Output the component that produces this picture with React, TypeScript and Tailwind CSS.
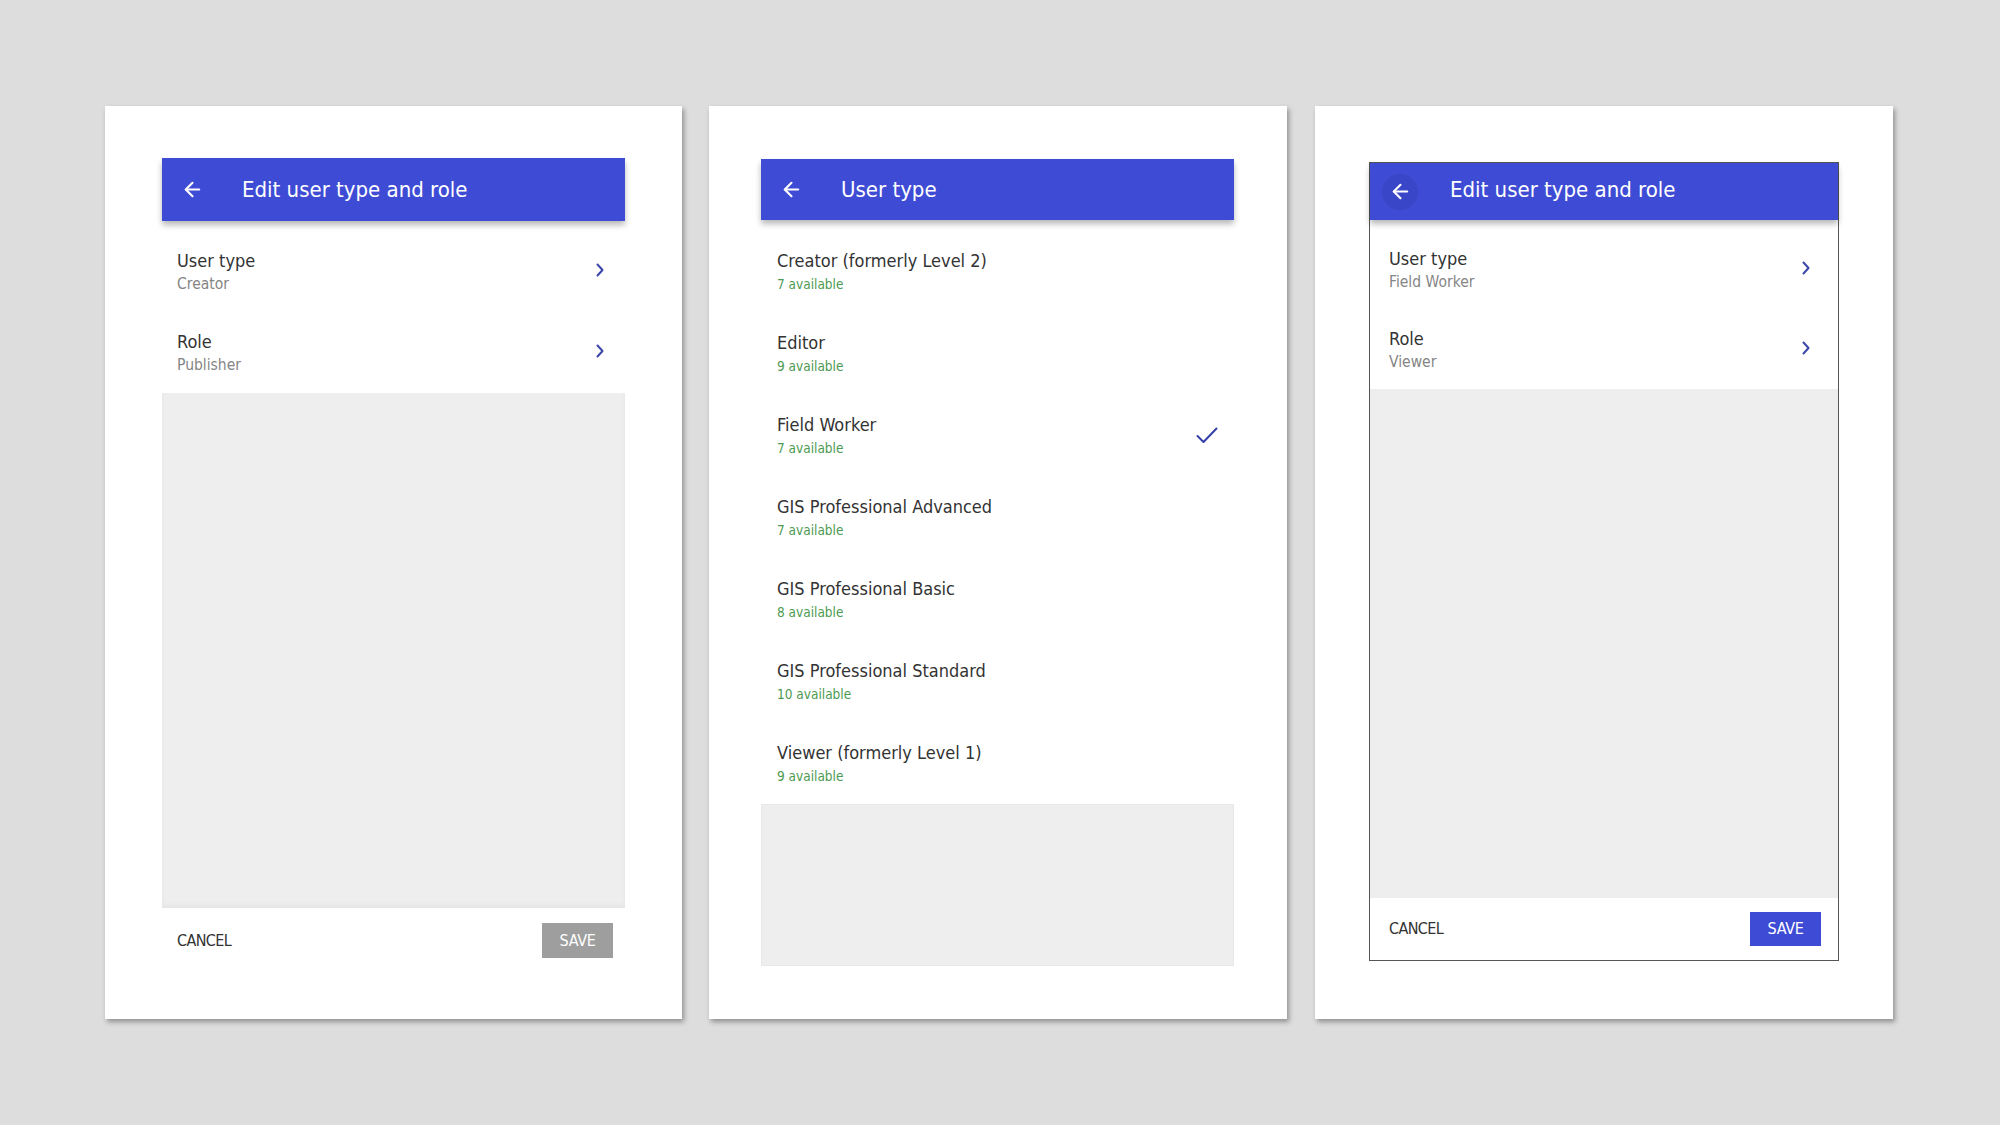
import { ArrowLeft } from "lucide-react";

const FONT = { fontFamily: '"DejaVu Sans Condensed", "DejaVu Sans", sans-serif' };

const USER_TYPES = [
  { name: "Creator (formerly Level 2)", count: 7 },
  { name: "Editor", count: 9 },
  { name: "Field Worker", count: 7, selected: true },
  { name: "GIS Professional Advanced", count: 7 },
  { name: "GIS Professional Basic", count: 8 },
  { name: "GIS Professional Standard", count: 10 },
  { name: "Viewer (formerly Level 1)", count: 9 },
];

function Chevron() {
  return (
    <svg width="10" height="14" viewBox="0 0 10 14" fill="none" className="-mt-[3px]">
      <polyline points="2.5,1.5 7.5,7 2.5,12.5" stroke="#3a46a8" strokeWidth="2" strokeLinecap="round" strokeLinejoin="round" />
    </svg>
  );
}

function Check() {
  return (
    <svg width="22" height="17" viewBox="0 0 22 17" fill="none">
      <polyline points="1.5,9 7.5,15 20.5,1.5" stroke="#3340a8" strokeWidth="2" strokeLinecap="round" strokeLinejoin="round" />
    </svg>
  );
}

function Header({ title, height, ripple }: { title: string; height: string; ripple?: boolean }) {
  return (
    <div className={`relative z-10 flex items-center bg-[#3e4bd4] shadow-[0_4px_6px_rgba(0,0,0,0.28)] ${height}`}>
      <div className="flex w-[80px] justify-center pr-[20px]">
        <div className={`flex h-[36px] w-[36px] items-center justify-center rounded-full ${ripple ? "bg-[#3a46c8]" : ""}`}>
          <ArrowLeft size={23} color="white" strokeWidth={2.2} />
        </div>
      </div>
      <span className={`text-[22px] leading-none text-white ${ripple ? "-mt-[4px]" : ""}`}>{title}</span>
    </div>
  );
}

function Item({ title, sub, green, right, h, pl, pr }: { title: string; sub: string; green?: boolean; right?: React.ReactNode; h: string; pl: string; pr: string }) {
  return (
    <div className={`flex items-center justify-between ${h} ${pl} ${pr}`}>
      <div>
        <div className="text-[18px] leading-[22px] text-[#333333]">{title}</div>
        <div className={`mt-[3px] leading-[18px] ${green ? "text-[13.5px] text-[#4d9a52]" : "text-[15.5px] text-[#858585]"}`}>{sub}</div>
      </div>
      {right}
    </div>
  );
}

function Panel({ children, className }: { children: React.ReactNode; className: string }) {
  return (
    <div className={`h-[913px] bg-white shadow-[2px_3px_5px_rgba(0,0,0,0.35)] ${className}`}>{children}</div>
  );
}

export default function App() {
  return (
    <div className="h-[1125px] w-[2000px] bg-[#dddddd]" style={FONT}>
      <div className="flex gap-[27px] pl-[105px] pt-[106px]">
        <Panel className="w-[577px] px-[57px] pt-[52px]">
          <div className="flex h-[815px] flex-col">
            <Header title="Edit user type and role" height="h-[63px]" />
            <div className="pt-[10px]">
              <Item title="User type" sub="Creator" h="h-[81px]" pl="pl-[15px]" pr="pr-[20px]" right={<Chevron />} />
              <Item title="Role" sub="Publisher" h="h-[81px]" pl="pl-[15px]" pr="pr-[20px]" right={<Chevron />} />
            </div>
            <div className="flex-1 bg-[#eeeeee] shadow-[inset_0_-3px_4px_rgba(0,0,0,0.04)]" />
            <div className="flex h-[65px] items-center justify-between pl-[15px] pr-[12px]">
              <span className="text-[16px] tracking-[-0.6px] text-[#333333]">CANCEL</span>
              <div className="flex h-[35px] w-[71px] items-center justify-center bg-[#9e9e9e] text-[16px] tracking-[-0.3px] text-white">SAVE</div>
            </div>
          </div>
        </Panel>

        <Panel className="w-[578px] pl-[52px] pr-[53px] pt-[53px]">
          <div className="flex h-[807px] flex-col">
            <Header title="User type" height="h-[61px]" />
            <div className="pt-[10px]">
              {USER_TYPES.map((t) => (
                <Item
                  key={t.name}
                  title={t.name}
                  sub={`${t.count} available`}
                  green
                  h="h-[82px]"
                  pl="pl-[16px]"
                  pr="pr-[16px]"
                  right={t.selected ? <Check /> : null}
                />
              ))}
            </div>
            <div className="flex-1 border border-[#e8e8e8] bg-[#eeeeee]" />
          </div>
        </Panel>

        <Panel className="ml-px w-[578px] px-[54px] pt-[56px]">
          <div className="flex h-[799px] flex-col border-[1.5px] border-[#555555]">
            <Header title="Edit user type and role" height="h-[57px]" ripple />
            <div className="pt-[9px]">
              <Item title="User type" sub="Field Worker" h="h-[80px]" pl="pl-[19px]" pr="pr-[27px]" right={<Chevron />} />
              <Item title="Role" sub="Viewer" h="h-[80px]" pl="pl-[19px]" pr="pr-[27px]" right={<Chevron />} />
            </div>
            <div className="flex-1 bg-[#eeeeee]" />
            <div className="flex h-[62px] items-center justify-between pl-[19px] pr-[17px]">
              <span className="text-[16px] tracking-[-0.6px] text-[#333333]">CANCEL</span>
              <div className="flex h-[34px] w-[71px] items-center justify-center bg-[#3e4bd4] text-[16px] tracking-[-0.3px] text-white">SAVE</div>
            </div>
          </div>
        </Panel>
      </div>
    </div>
  );
}
